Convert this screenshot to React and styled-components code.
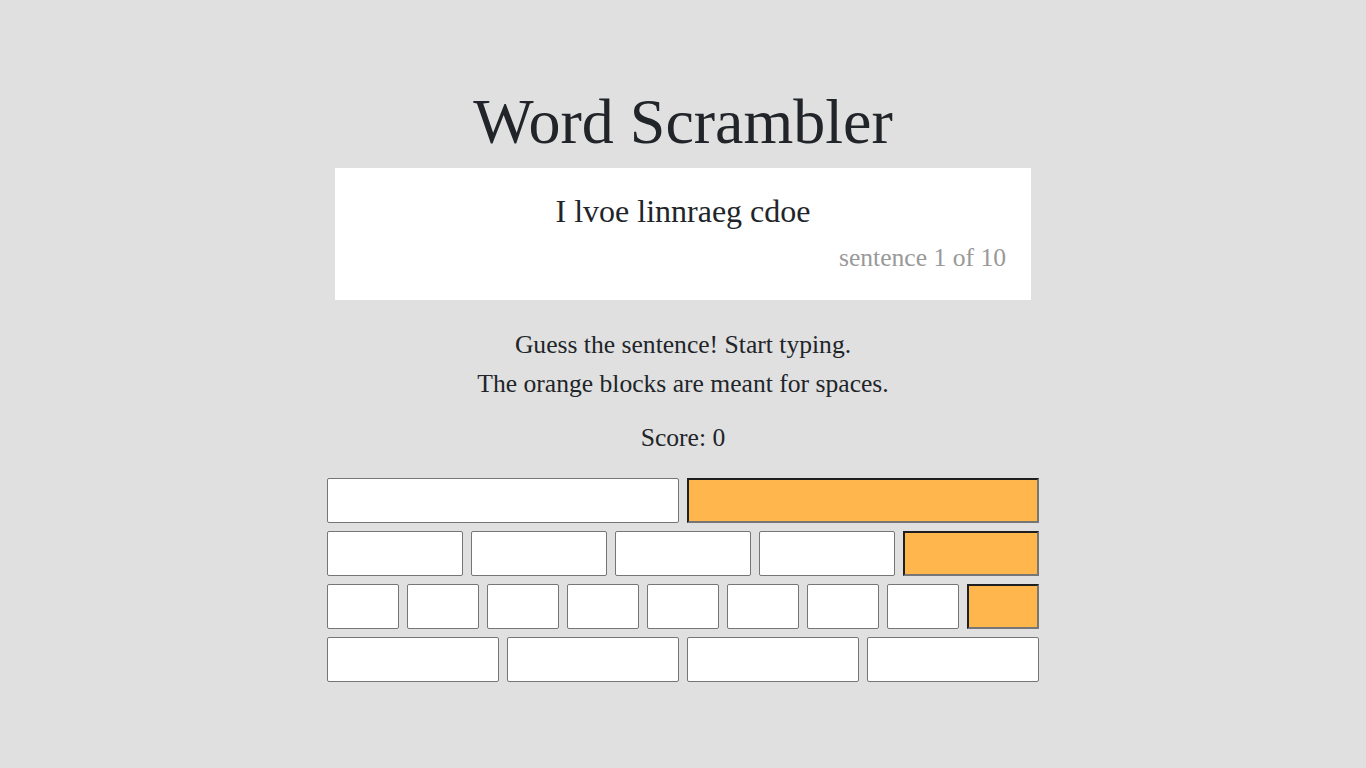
import React from 'react'
import styled, { createGlobalStyle } from 'styled-components'

const GlobalStyle = createGlobalStyle`
  html, body {
    margin: 0;
    background: #e0e0e0;
    font-family: "Liberation Serif", "Times New Roman", serif;
    color: #212529;
  }
`

const Page = styled.main`
  display: flex;
  flex-direction: column;
  align-items: center;
  padding-top: 85px;
`

const Title = styled.h1`
  margin: 0 0 9px;
  font-size: 64px;
  font-weight: 400;
  line-height: 74px;
  color: #212529;
`

const Card = styled.section`
  box-sizing: border-box;
  width: 696px;
  height: 132px;
  background: #fff;
  padding: 25px 25px 0;
  display: flex;
  flex-direction: column;
`

const Scrambled = styled.p`
  margin: 0 0 13px;
  text-align: center;
  font-size: 32px;
  line-height: 37px;
`

const Counter = styled.p`
  margin: 0;
  text-align: right;
  font-size: 25.6px;
  line-height: 30px;
  color: #999;
`

const Hint = styled.p`
  margin: 25px 0 0;
  text-align: center;
  font-size: 25.6px;
  line-height: 39px;
`

const Score = styled.p`
  margin: 15px 0 21px;
  font-size: 25.6px;
  line-height: 39px;
`

const Board = styled.div`
  width: 712px;
  display: flex;
  flex-direction: column;
  gap: 8px;
`

const Row = styled.div`
  display: grid;
  grid-template-columns: repeat(${(p) => p.$count}, 1fr);
  gap: 8px;
`

const Block = styled.input`
  width: 100%;
  min-width: 0;
  height: 45px;
  box-sizing: border-box;
  margin: 0;
  padding: 0;
  outline: none;
  background: ${(p) => (p.$space ? '#ffb74d' : '#fff')};
  border-radius: ${(p) => (p.$space ? '0' : '2px')};
  border: ${(p) => (p.$space ? '2px solid' : '1px solid #767676')};
  border-color: ${(p) =>
    p.$space ? '#1f1f1f #767676 #767676 #1f1f1f' : '#767676'};
`

const rows = [
  ['I', ' '],
  ['l', 'v', 'o', 'e', ' '],
  ['l', 'i', 'n', 'n', 'r', 'a', 'e', 'g', ' '],
  ['c', 'd', 'o', 'e'],
]

export default function App() {
  return (
    <>
      <GlobalStyle />
      <Page>
        <Title>Word Scrambler</Title>
        <Card>
          <Scrambled>I lvoe linnraeg cdoe</Scrambled>
          <Counter>sentence 1 of 10</Counter>
        </Card>
        <Hint>
          Guess the sentence! Start typing.
          <br />
          The orange blocks are meant for spaces.
        </Hint>
        <Score>Score: 0</Score>
        <Board>
          {rows.map((row, i) => (
            <Row key={i} $count={row.length}>
              {row.map((ch, j) => (
                <Block key={j} readOnly $space={ch === ' '} />
              ))}
            </Row>
          ))}
        </Board>
      </Page>
    </>
  )
}
